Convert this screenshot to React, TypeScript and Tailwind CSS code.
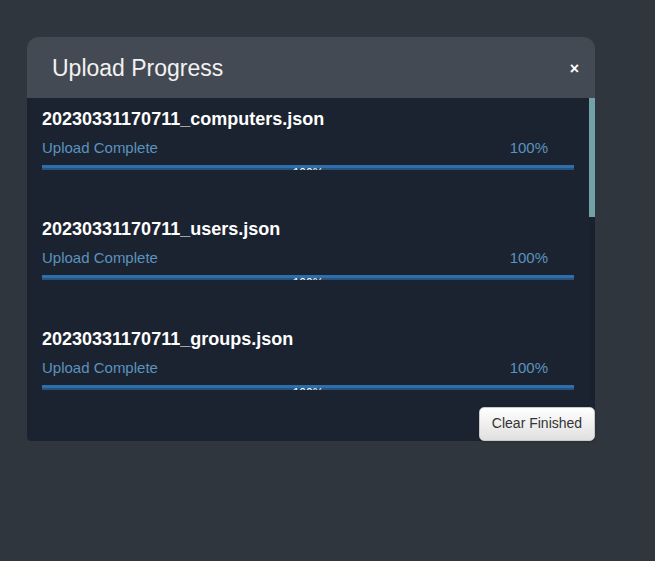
import React from "react";

const files = [
  "20230331170711_computers.json",
  "20230331170711_users.json",
  "20230331170711_groups.json",
  "20230331170711_ous.json",
];

function Item({ name }: { name: string }) {
  return (
    <div className="h-[110px] shrink-0 px-[15px] pt-[10px]">
      <div className="h-[22px] text-[18px] leading-[22px] font-bold text-white whitespace-nowrap">
        {name}
      </div>
      <div className="mt-[8px] h-[20px] flex justify-between items-center pr-[26px] text-[15px] leading-[20px] text-[#5a93bf]">
        <span>Upload Complete</span>
        <span>100%</span>
      </div>
      <div className="mt-[7px] relative h-[5px] overflow-hidden bg-[#2f6ea8]">
        <div className="absolute left-0 right-0 bottom-0 h-[2px] bg-[#24537e]" />
        <span className="absolute left-0 right-0 top-[2px] text-center text-[12px] leading-none text-white">
          100%
        </span>
      </div>
    </div>
  );
}

export default function App() {
  return (
    <div
      className="min-h-[561px] w-full bg-[#30363d] pl-[27px] pt-[37px]"
      style={{ fontFamily: '"Liberation Sans", Arial, sans-serif' }}
    >
      <div className="w-[568px] flex flex-col">
        <div className="h-[61px] rounded-t-[12px] bg-[#444a53] flex items-center justify-between pl-[25px] pr-[16px]">
          <span className="text-[23px] text-[#f2f2f2] mt-[2px]">Upload Progress</span>
          <span className="text-[16px] font-bold text-white mt-[3px]">×</span>
        </div>
        <div className="bg-[#1c2330] rounded-b-[4px] flex flex-col">
          <div className="h-[302px] flex">
            <div className="flex-1 overflow-hidden flex flex-col">
              {files.map((f) => (
                <Item key={f} name={f} />
              ))}
            </div>
            <div className="w-[6px] bg-[#1a212c] flex flex-col">
              <div className="h-[119px] bg-[#72a2a7]" />
            </div>
          </div>
          <div className="h-[41px] flex items-end justify-end">
            <button className="h-[34px] w-[116px] pb-[2px] rounded-[5px] border border-[#c8c8c8] bg-gradient-to-b from-white to-[#e0e0e0] text-[14px] text-[#333] shadow-sm">
              Clear Finished
            </button>
          </div>
        </div>
      </div>
    </div>
  );
}
